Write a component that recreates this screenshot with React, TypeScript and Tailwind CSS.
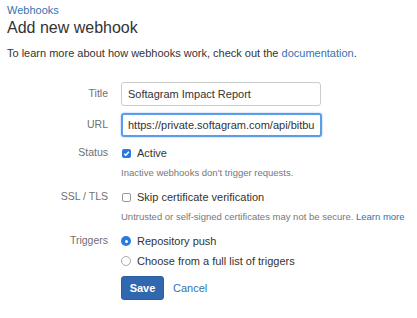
import React from "react";

const Label = ({ children }: { children: React.ReactNode }) => (
    <div className="w-[108px] shrink-0 text-right text-[10.5px] text-[#707070]">{children}</div>
);

export default function App() {
    return (
        <div className="w-[417px] h-[318px] bg-white px-[7px] pt-[3px] font-['Liberation_Sans',Arial,sans-serif] text-[#333]">
            <a className="block text-[11px] leading-[14px] text-[#3572b0]">Webhooks</a>
            <h1 className="text-[16px] leading-[20px] mt-[1px]">Add new webhook</h1>
            <p className="text-[11px] leading-[14px] mt-[8px]">
                To learn more about how webhooks work, check out the{" "}
                <a className="text-[#3572b0]">documentation</a>.
            </p>

            <div className="mt-[22px] -ml-[7px] flex flex-col">
                <div className="flex items-center gap-[13px] h-[24px]">
                    <Label>Title</Label>
                    <div className="w-[200px] h-[24px] border border-[#ccc] rounded-[3px] px-[6px] flex items-center text-[11px] text-[#333]">
                        Softagram Impact Report
                    </div>
                </div>
                <div className="flex items-center gap-[13px] h-[24px] mt-[7px]">
                    <Label>URL</Label>
                    <div className="w-[201px] h-[24px] border-2 border-[#5b9bea] shadow-[0_0_2px_#7fb2f0] rounded-[3px] px-[5px] flex items-center text-[11px] text-[#333] overflow-hidden whitespace-nowrap">
                        https://private.softagram.com/api/bitbu
                    </div>
                </div>
                <div className="flex items-center gap-[14px] mt-[8px] h-[16px]">
                    <Label>Status</Label>
                    <div className="flex items-center gap-[6px] text-[11px]">
                        <span className="w-[9px] h-[9px] rounded-[2px] bg-[#2a79e0] flex items-center justify-center">
                            <svg width="7" height="7" viewBox="0 0 10 10"><path d="M1.8 5.2l2.2 2.2 4.4-5" stroke="white" strokeWidth="2" fill="none" /></svg>
                        </span>
                        Active
                    </div>
                </div>
                <div className="ml-[121px] mt-[6px] text-[9.5px] leading-[12px] text-[#777]">Inactive webhooks don't trigger requests.</div>
                <div className="flex items-center gap-[14px] mt-[10px] h-[16px]">
                    <Label>SSL / TLS</Label>
                    <div className="flex items-center gap-[6px] text-[11px]">
                        <span className="w-[9px] h-[9px] rounded-[2px] border border-[#999] bg-white" />
                        Skip certificate verification
                    </div>
                </div>
                <div className="ml-[121px] mt-[6px] text-[9.5px] leading-[12px] text-[#777] whitespace-nowrap">
                    Untrusted or self-signed certificates may not be secure. <a className="text-[#3572b0]">Learn more</a>
                </div>
                <div className="flex items-center gap-[13px] mt-[10px] h-[16px]">
                    <Label>Triggers</Label>
                    <div className="flex items-center gap-[6px] text-[11px]">
                        <span className="w-[10px] h-[10px] rounded-full bg-[#2a79e0] flex items-center justify-center">
                            <span className="w-[3px] h-[3px] rounded-full bg-white" />
                        </span>
                        Repository push
                    </div>
                </div>
                <div className="flex items-center gap-[6px] ml-[121px] mt-[4px] h-[16px] text-[11px]">
                    <span className="w-[10px] h-[10px] rounded-full border border-[#aaa] bg-white" />
                    Choose from a full list of triggers
                </div>
                <div className="flex items-center gap-[9px] ml-[121px] mt-[7px]">
                    <button className="w-[43px] h-[24px] rounded-[3px] bg-[#3068b0] border border-[#2a5d9f] text-white text-[11px] font-bold">Save</button>
                    <a className="text-[11px] text-[#3572b0]">Cancel</a>
                </div>
            </div>
        </div>
    );
}
